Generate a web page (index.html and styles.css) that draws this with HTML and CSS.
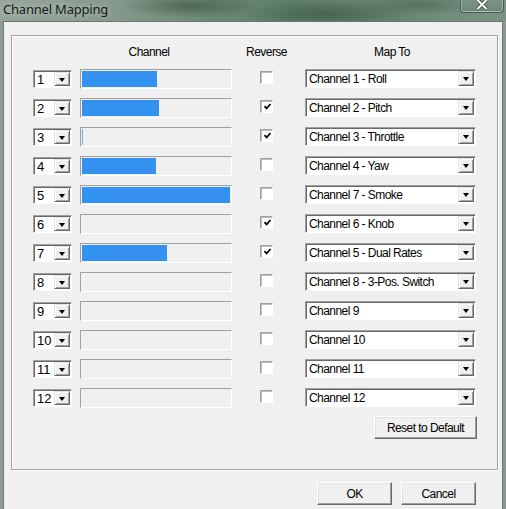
FILE: index.html
```html
<!DOCTYPE html>
<html>
<head>
<meta charset="utf-8">
<link rel="stylesheet" href="styles.css">
</head>
<body>
<div class="screen">
  <div class="titlebar">
    <span class="title">Channel Mapping</span>
    <div class="close">
      <svg width="12" height="9" viewBox="0 0 12 9"><path d="M1.5 0 L10.5 9 M10.5 0 L1.5 9" stroke="#3a4a40" stroke-width="3.6"/><path d="M1.5 0 L10.5 9 M10.5 0 L1.5 9" stroke="#fff" stroke-width="2"/></svg>
    </div>
  </div>
  <div class="client">
    <div class="group">
      <div class="table">
        <div class="hdr c-bar"><span class="hdr-ch">Channel</span></div>
        <div class="hdr c-chk"><span>Reverse</span></div>
        <div class="hdr c-map"><span class="hdr-map">Map To</span></div>

        <div class="combo c-cb"><span class="field">1</span><span class="dbtn"><i class="arrow"></i></span></div>
        <div class="bar c-bar"><div class="fill" style="width:75px"></div></div>
        <div class="chk c-chk"></div>
        <div class="combo c-map"><span class="field">Channel 1 - Roll</span><span class="dbtn"><i class="arrow"></i></span></div>

        <div class="combo c-cb"><span class="field">2</span><span class="dbtn"><i class="arrow"></i></span></div>
        <div class="bar c-bar"><div class="fill" style="width:77px"></div></div>
        <div class="chk c-chk on"><svg width="9" height="9" viewBox="0 0 9 9"><path d="M1.5 4.2 L3.6 6.4 L7.5 2" fill="none" stroke="#000" stroke-width="1.7"/></svg></div>
        <div class="combo c-map"><span class="field">Channel 2 - Pitch</span><span class="dbtn"><i class="arrow"></i></span></div>

        <div class="combo c-cb"><span class="field">3</span><span class="dbtn"><i class="arrow"></i></span></div>
        <div class="bar c-bar"><div class="fill thin" style="width:1px"></div></div>
        <div class="chk c-chk on"><svg width="9" height="9" viewBox="0 0 9 9"><path d="M1.5 4.2 L3.6 6.4 L7.5 2" fill="none" stroke="#000" stroke-width="1.7"/></svg></div>
        <div class="combo c-map"><span class="field">Channel 3 - Throttle</span><span class="dbtn"><i class="arrow"></i></span></div>

        <div class="combo c-cb"><span class="field">4</span><span class="dbtn"><i class="arrow"></i></span></div>
        <div class="bar c-bar"><div class="fill" style="width:74px"></div></div>
        <div class="chk c-chk"></div>
        <div class="combo c-map"><span class="field">Channel 4 - Yaw</span><span class="dbtn"><i class="arrow"></i></span></div>

        <div class="combo c-cb"><span class="field">5</span><span class="dbtn"><i class="arrow"></i></span></div>
        <div class="bar c-bar"><div class="fill" style="width:148px"></div></div>
        <div class="chk c-chk"></div>
        <div class="combo c-map"><span class="field">Channel 7 - Smoke</span><span class="dbtn"><i class="arrow"></i></span></div>

        <div class="combo c-cb"><span class="field">6</span><span class="dbtn"><i class="arrow"></i></span></div>
        <div class="bar c-bar"></div>
        <div class="chk c-chk on"><svg width="9" height="9" viewBox="0 0 9 9"><path d="M1.5 4.2 L3.6 6.4 L7.5 2" fill="none" stroke="#000" stroke-width="1.7"/></svg></div>
        <div class="combo c-map"><span class="field">Channel 6 - Knob</span><span class="dbtn"><i class="arrow"></i></span></div>

        <div class="combo c-cb"><span class="field">7</span><span class="dbtn"><i class="arrow"></i></span></div>
        <div class="bar c-bar"><div class="fill" style="width:85px"></div></div>
        <div class="chk c-chk on"><svg width="9" height="9" viewBox="0 0 9 9"><path d="M1.5 4.2 L3.6 6.4 L7.5 2" fill="none" stroke="#000" stroke-width="1.7"/></svg></div>
        <div class="combo c-map"><span class="field">Channel 5 - Dual Rates</span><span class="dbtn"><i class="arrow"></i></span></div>

        <div class="combo c-cb"><span class="field">8</span><span class="dbtn"><i class="arrow"></i></span></div>
        <div class="bar c-bar"></div>
        <div class="chk c-chk"></div>
        <div class="combo c-map"><span class="field">Channel 8 - 3-Pos. Switch</span><span class="dbtn"><i class="arrow"></i></span></div>

        <div class="combo c-cb"><span class="field">9</span><span class="dbtn"><i class="arrow"></i></span></div>
        <div class="bar c-bar"></div>
        <div class="chk c-chk"></div>
        <div class="combo c-map"><span class="field">Channel 9</span><span class="dbtn"><i class="arrow"></i></span></div>

        <div class="combo c-cb"><span class="field">10</span><span class="dbtn"><i class="arrow"></i></span></div>
        <div class="bar c-bar"></div>
        <div class="chk c-chk"></div>
        <div class="combo c-map"><span class="field">Channel 10</span><span class="dbtn"><i class="arrow"></i></span></div>

        <div class="combo c-cb"><span class="field">11</span><span class="dbtn"><i class="arrow"></i></span></div>
        <div class="bar c-bar"></div>
        <div class="chk c-chk"></div>
        <div class="combo c-map"><span class="field">Channel 11</span><span class="dbtn"><i class="arrow"></i></span></div>

        <div class="combo c-cb"><span class="field">12</span><span class="dbtn"><i class="arrow"></i></span></div>
        <div class="bar c-bar"></div>
        <div class="chk c-chk"></div>
        <div class="combo c-map"><span class="field">Channel 12</span><span class="dbtn"><i class="arrow"></i></span></div>
      </div>
      <div class="reset-row"><div class="btn reset">Reset to Default</div></div>
    </div>
    <div class="footer">
      <div class="btn">OK</div>
      <div class="btn">Cancel</div>
    </div>
  </div>
</div>
</body>
</html>
```
FILE: styles.css
```css
html, body {
  margin: 0;
  padding: 0;
}
body {
  width: 506px;
  height: 509px;
  overflow: hidden;
  background: #8a9b90;
  font-family: "Liberation Sans", Arial, sans-serif;
  font-size: 12px;
  letter-spacing: -0.55px;
  color: #000;
}
.screen {
  width: 506px;
  height: 509px;
  display: flex;
  flex-direction: column;
  background: linear-gradient(90deg, #8f9c93, #7f8f85 40%, #8a9a90);
}
.titlebar {
  height: 21px;
  flex: none;
  display: flex;
  justify-content: space-between;
  align-items: flex-start;
  background:
    radial-gradient(ellipse 70px 12px at 190px 6px, rgba(50,75,60,0.55), transparent),
    radial-gradient(ellipse 90px 14px at 330px 14px, rgba(45,72,55,0.5), transparent),
    radial-gradient(ellipse 60px 10px at 420px 5px, rgba(60,85,70,0.45), transparent),
    linear-gradient(90deg, #97a69b 0%, #86998c 22%, #6b8874 42%, #5e7e69 58%, #6a8774 78%, #7c9384 100%);
}
.title {
  font-family: "Noto Sans", "Open Sans", sans-serif;
  font-size: 13px;
  line-height: 19px;
  padding-left: 3px;
  color: #141a16;
  letter-spacing: -0.2px;
  text-shadow: 0 0 6px rgba(230,240,232,0.7);
}
.close {
  width: 44px;
  height: 13px;
  margin-right: 2px;
  box-sizing: border-box;
  border: 1px solid #4a5a50;
  border-top: none;
  border-radius: 0 0 4px 4px;
  box-shadow: inset 0 -1px rgba(255,255,255,0.45), inset 1px 0 rgba(255,255,255,0.35), inset -1px 0 rgba(255,255,255,0.35);
  background: linear-gradient(#7d9485, #6d8676);
  display: flex;
  justify-content: center;
  align-items: flex-start;
}
.close svg { display: block; }

.client {
  flex: 1;
  margin: 0 3px;
  border: 1px solid #6e756f;
  border-bottom: none;
  background: #f0f0f0;
  display: flex;
  flex-direction: column;
}
.group {
  margin: 13px 0 0 7px;
  width: 487px;
  height: 435px;
  box-sizing: border-box;
  border: 1px solid #a0a0a0;
  box-shadow: inset 1px 1px #fff, 1px 1px #fff;
  padding: 9px 0 0 21px;
}
.table {
  display: grid;
  grid-template-columns: 39px 8px 152px 28px 13px 32px 171px;
  grid-template-rows: 24px repeat(11, 29px) 28px;
  align-items: start;
}
.c-cb { grid-column: 1; }
.c-bar { grid-column: 3; }
.c-chk { grid-column: 5; }
.c-map { grid-column: 7; }

.hdr {
  display: flex;
  justify-content: center;
  white-space: nowrap;
  line-height: 14px;
}
.hdr-ch { margin-right: 14px; }
.hdr-map { margin-left: 3px; }

.combo {
  display: flex;
  box-sizing: border-box;
  border: 1px solid;
  border-color: #a0a0a0 #ffffff #ffffff #a0a0a0;
  background: #fff;
  position: relative;
}
.combo.c-cb { height: 18px; margin-top: 1px; }
.combo.c-map { height: 19px; }
.combo::before {
  content: "";
  position: absolute;
  inset: 0;
  border-top: 1px solid #696969;
  border-left: 1px solid #696969;
  pointer-events: none;
}
.field {
  flex: 1;
  min-width: 0;
  white-space: nowrap;
  overflow: hidden;
  padding-left: 3px;
  line-height: 17px;
}
.c-cb .field { font-size: 13px; letter-spacing: 0; }
.c-map .field { padding-left: 3px; line-height: 18px; }
.dbtn {
  flex: none;
  width: 16px;
  margin: 1px 1px 1px 0;
  box-sizing: border-box;
  background: #f0f0f0;
  border: 1px solid;
  border-color: #e3e3e3 #696969 #696969 #e3e3e3;
  box-shadow: inset 1px 1px #fff, inset -1px -1px #a0a0a0;
  display: flex;
  justify-content: center;
  align-items: center;
}
.arrow {
  width: 0;
  height: 0;
  border-left: 3.5px solid transparent;
  border-right: 3.5px solid transparent;
  border-top: 4px solid #000;
  margin-top: 1px;
}

.bar {
  height: 20px;
  box-sizing: border-box;
  border: 1px solid;
  border-color: #a0a0a0 #ffffff #ffffff #a0a0a0;
  padding: 1px;
  background: #f0f0f0;
}
.fill {
  height: 16px;
  background: #3391f0;
}
.fill.thin { background: #7fa9d8; }

.chk {
  width: 13px;
  height: 13px;
  margin-top: 2px;
  box-sizing: border-box;
  border: 1px solid;
  border-color: #a0a0a0 #ffffff #ffffff #a0a0a0;
  background: #fff;
  box-shadow: inset 1px 1px #bdbdbd;
  display: flex;
  justify-content: center;
  align-items: center;
}
.chk svg { display: block; margin: 0 0 0 1px; }

.reset-row {
  width: 444px;
  display: flex;
  justify-content: flex-end;
}
.btn {
  width: 75px;
  height: 23px;
  box-sizing: border-box;
  border: 1px solid;
  border-color: #ffffff #696969 #696969 #ffffff;
  box-shadow: inset -1px -1px #a0a0a0, inset 1px 1px #e3e3e3;
  background: #f0f0f0;
  display: flex;
  justify-content: center;
  align-items: center;
  white-space: nowrap;
}
.btn.reset { width: 103px; }
.footer {
  margin-top: 12px;
  padding-right: 26px;
  display: flex;
  justify-content: flex-end;
  gap: 9px;
}
```
